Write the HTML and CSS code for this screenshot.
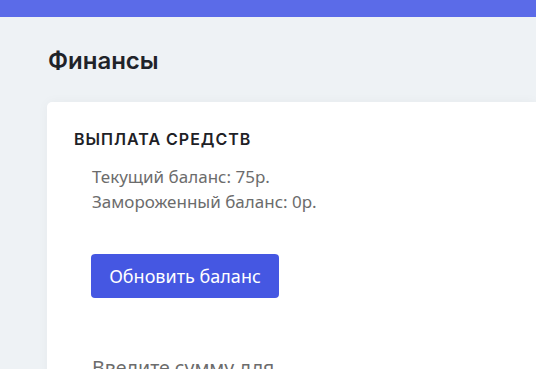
FILE: index.html
```html
<!DOCTYPE html>
<html lang="ru">
<head>
  <meta charset="UTF-8" />
  <meta name="viewport" content="width=device-width, initial-scale=1.0" />
  <title>Финансы</title>
  <link rel="stylesheet" href="styles.css">
</head>
<body>
  <div class="topbar"></div>

  <div class="page">
    <h2 class="page-title">Финансы</h2>

    <div class="card">
      <h4 class="card-title">Выплата средств</h4>
      <div class="balance">
        <p>Текущий баланс: 75р.</p>
        <p>Замороженный баланс: 0р.</p>
      </div>

      <button class="btn">Обновить баланс</button>

      <p class="hint">Введите сумму для вывода</p>
    </div>
  </div>
</body>
</html>
```

FILE: styles.css
```css
body {
  font-family: Inter, Roboto, "Noto Sans", sans-serif;
  background: #eef2f5;
  margin: 0;
  padding: 0;
  overflow: hidden;
  height: 369px;
}
.topbar {
  height: 17px;
  background: #5b6be8;
}
.page {
  padding: 29px 0 0 47px;
}
.page-title {
  margin: 0 0 26px 1px;
  font-size: 24px;
  font-weight: 600;
  color: #1f2329;
  line-height: 30px;
}
.card {
  background: #fff;
  border-radius: 5px 0 0 0;
  box-shadow: 0 0 12px rgba(0, 0, 0, 0.04);
  padding: 26px 0 0 27px;
  min-height: 300px;
}
.card-title {
  margin: 0 0 14px;
  font-size: 16px;
  font-weight: 600;
  letter-spacing: 1px;
  text-transform: uppercase;
  color: #1e2126;
  line-height: 22px;
}
.balance {
  padding-left: 18px;
  color: #6c6c6c;
  font-family: "Noto Sans", sans-serif;
  font-size: 17px;
}
.balance p {
  margin: 0;
  line-height: 25px;
}
.btn {
  margin: 40px 0 0 17px;
  width: 188px;
  height: 44px;
  background: #4557e2;
  color: #fff;
  border: none;
  border-radius: 4px;
  font-family: "Noto Sans", sans-serif;
  font-size: 18px;
  cursor: pointer;
}
.hint {
  max-width: 210px;
  margin: 57px 0 0 18px;
  color: #6c6c6c;
  font-family: "Noto Sans", sans-serif;
  font-size: 19.5px;
  line-height: 26px;
}
```
